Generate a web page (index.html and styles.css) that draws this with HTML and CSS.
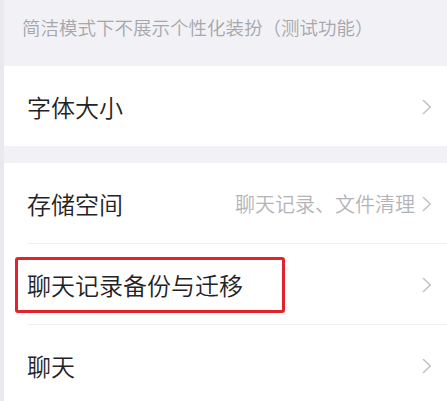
FILE: index.html
```html
<!DOCTYPE html>
<html lang="zh-CN">
<head>
<meta charset="utf-8">
<title>设置</title>
<link rel="stylesheet" href="styles.css">
</head>
<body>
<div class="page">
  <div class="note">简洁模式下不展示个性化装扮（测试功能）</div>
  <div class="group">
    <div class="row">
      <span class="label">字体大小</span>
      <span class="right">
        <svg class="chev" viewBox="0 0 10 16" width="10" height="16"><polyline points="1.5,1.5 8.3,8 1.5,14.5"/></svg>
      </span>
    </div>
  </div>
  <div class="gap"></div>
  <div class="group">
    <div class="row">
      <span class="label">存储空间</span>
      <span class="right">
        <span class="value">聊天记录、文件清理</span>
        <svg class="chev" viewBox="0 0 10 16" width="10" height="16"><polyline points="1.5,1.5 8.3,8 1.5,14.5"/></svg>
      </span>
    </div>
    <div class="row">
      <span class="label">聊天记录备份与迁移</span>
      <span class="right">
        <svg class="chev" viewBox="0 0 10 16" width="10" height="16"><polyline points="1.5,1.5 8.3,8 1.5,14.5"/></svg>
      </span>
      <span class="highlight"></span>
    </div>
    <div class="row">
      <span class="label">聊天</span>
      <span class="right">
        <svg class="chev" viewBox="0 0 10 16" width="10" height="16"><polyline points="1.5,1.5 8.3,8 1.5,14.5"/></svg>
      </span>
    </div>
  </div>
</div>
</body>
</html>
```

FILE: styles.css
```css
html, body {
  margin: 0;
  padding: 0;
  background: #f2f2f6;
}

body {
  width: 447px;
  height: 401px;
  overflow: hidden;
  font-family: "Noto Sans CJK SC", "Noto Sans", sans-serif;
}

.page {
  border-left: 4px solid #eaeaee;
  min-height: 401px;
  box-sizing: border-box;
}

.note {
  height: 66px;
  box-sizing: border-box;
  padding: 14px 0 0 18px;
  font-size: 18.5px;
  line-height: 26px;
  font-weight: 350;
  color: #a6a6ab;
  white-space: nowrap;
}

.group {
  background: #ffffff;
}

.gap {
  height: 17px;
}

.row {
  position: relative;
  height: 80px;
  display: flex;
  align-items: center;
  justify-content: space-between;
  padding: 2px 15px 0 23px;
  box-sizing: border-box;
}

.row + .row {
  height: 81px;
}

.row + .row::before {
  content: "";
  position: absolute;
  top: 0;
  left: 23px;
  right: 0;
  height: 1px;
  background: #efeff1;
}

.label {
  font-size: 24px;
  line-height: 32px;
  font-weight: 350;
  color: #232325;
  white-space: nowrap;
}

.right {
  display: flex;
  align-items: center;
  gap: 7px;
}

.value {
  font-size: 20px;
  line-height: 28px;
  font-weight: 350;
  color: #b4b4b8;
  white-space: nowrap;
}

.chev {
  display: block;
  fill: none;
  stroke: #c2c2c6;
  stroke-width: 1.6;
  stroke-linecap: round;
  stroke-linejoin: round;
}

.highlight {
  position: absolute;
  left: 11px;
  top: 14px;
  width: 270px;
  height: 56px;
  box-sizing: border-box;
  border: 3px solid #e2232c;
  border-radius: 3px;
}
```
